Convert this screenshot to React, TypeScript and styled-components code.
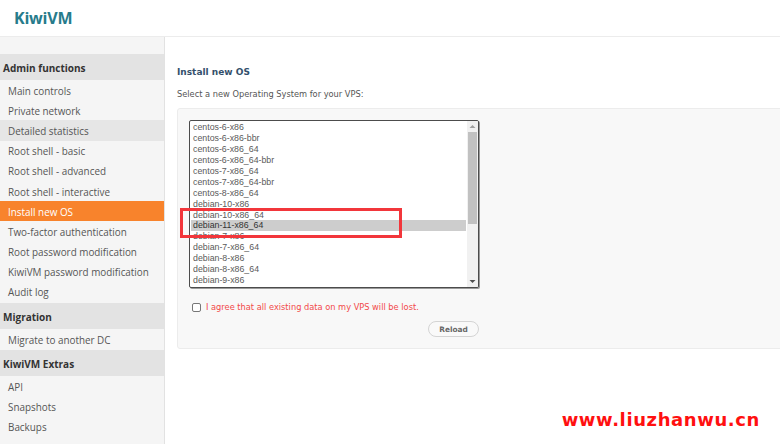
import React from 'react'
import styled, { createGlobalStyle } from 'styled-components'


const GlobalStyle = createGlobalStyle`
  html, body {
    margin: 0;
    padding: 0;
    background: #fff;
    overflow: hidden;
  }
  body {
    font-family: 'Open Sans', 'Liberation Sans', sans-serif;
  }
`


const adminItems = [
  'Main controls',
  'Private network',
  'Detailed statistics',
  'Root shell - basic',
  'Root shell - advanced',
  'Root shell - interactive',
  'Install new OS',
  'Two-factor authentication',
  'Root password modification',
  'KiwiVM password modification',
  'Audit log',
]

// only the rows that fit in the visible part of the list box
const osList = [
  'centos-6-x86',
  'centos-6-x86-bbr',
  'centos-6-x86_64',
  'centos-6-x86_64-bbr',
  'centos-7-x86_64',
  'centos-7-x86_64-bbr',
  'centos-8-x86_64',
  'debian-10-x86',
  'debian-10-x86_64',
  'debian-11-x86_64',
  'debian-7-x86',
  'debian-7-x86_64',
  'debian-8-x86',
  'debian-8-x86_64',
  'debian-9-x86',
]


const Page = styled.div`
  width: 780px;
  height: 444px;
  display: flex;
  flex-direction: column;
  overflow: hidden;
  position: relative;
`

const Header = styled.header`
  height: 36px;
  flex: 0 0 36px;
  border-bottom: 1px solid #ececec;
  display: flex;
  align-items: center;
  padding-left: 14px;
`

const Logo = styled.div`
  font-family: 'Open Sans', sans-serif;
  font-weight: 700;
  font-size: 16px;
  color: #277b8b;
  letter-spacing: -0.2px;
`

const Body = styled.div`
  flex: 1;
  display: flex;
  min-height: 0;
`

const Sidebar = styled.nav`
  width: 164px;
  flex: 0 0 164px;
  background: #f5f5f5;
  border-right: 1px solid #e2e2e2;
  padding-top: 17px;
`

const SectionTitle = styled.div<{ first?: boolean }>`
  height: 26px;
  margin-top: ${({ first }) => (first ? '0' : '1px')};
  background: #e3e3e3;
  display: flex;
  align-items: center;
  padding: 1px 0 0 3px;
  box-sizing: border-box;
  font-size: 10px;
  font-weight: 700;
  color: #333;
`

const NavItem = styled.div<{ active?: boolean; hover?: boolean }>`
  height: 20.2px;
  display: flex;
  align-items: center;
  padding: 1px 0 0 8px;
  box-sizing: border-box;
  font-size: 9.9px;
  color: ${({ active }) => (active ? '#fff' : '#555')};
  background: ${({ active, hover }) =>
    active ? '#f8832c' : hover ? '#e6e6e6' : 'transparent'};
  white-space: nowrap;
`

const Content = styled.main`
  flex: 1;
  padding: 29px 0 0 12px;
  min-width: 0;
`

const Title = styled.h2`
  margin: 0;
  font-family: 'DejaVu Sans', Verdana, sans-serif;
  font-size: 9px;
  font-weight: 700;
  color: #34506c;
  line-height: 12px;
`

const Subtitle = styled.p`
  margin: 10px 0 0;
  font-family: 'DejaVu Sans', Verdana, sans-serif;
  font-size: 8.25px;
  color: #555;
  line-height: 12px;
`

const Panel = styled.section`
  position: relative;
  margin-top: 8px;
  width: 640px;
  background: #f8f8f8;
  border: 1px solid #ececec;
  border-radius: 3px;
  padding: 11px 0 11px 11px;
`

const ListBox = styled.div`
  width: 288px;
  height: 166px;
  background: #fff;
  border: 1px solid #4c4c4c;
  border-radius: 2px;
  box-shadow: 1px 1px 0 #9a9a9a;
  display: flex;
  overflow: hidden;
`

const Options = styled.div`
  flex: 1;
  padding: 1px 1px 0;
  overflow: hidden;
`

const Option = styled.div<{ selected?: boolean }>`
  height: 10.95px;
  line-height: 11px;
  padding-left: 2px;
  font-family: 'Liberation Sans', Arial, sans-serif;
  font-size: 8.8px;
  color: ${({ selected }) => (selected ? '#333' : '#5a5a5a')};
  background: ${({ selected }) => (selected ? '#cdcdcd' : 'transparent')};
  white-space: nowrap;
  overflow: hidden;
`

const Scrollbar = styled.div`
  width: 11px;
  flex: 0 0 11px;
  background: #f1f1f1;
  display: flex;
  flex-direction: column;
  align-items: center;
`

const Arrow = styled.div`
  height: 11px;
  flex: 0 0 11px;
  display: flex;
  align-items: center;
  justify-content: center;
`

const Track = styled.div`
  flex: 1;
  width: 100%;
`

const Thumb = styled.div`
  width: 9px;
  margin: 0 auto;
  height: 92px;
  background: #c1c1c1;
`

const AgreeRow = styled.label`
  display: flex;
  align-items: center;
  gap: 5px;
  height: 10px;
  margin: 14px 0 0 3px;
  font-family: 'DejaVu Sans', Verdana, sans-serif;
  font-size: 8.25px;
  color: #f24a4a;
  white-space: nowrap;
`

const Check = styled.span`
  width: 7px;
  height: 7px;
  border: 1px solid #777;
  border-radius: 2px;
  background: #fff;
  display: inline-block;
`

const ButtonRow = styled.div`
  width: 290px;
  display: flex;
  justify-content: flex-end;
  margin-top: 9px;
`

const ReloadButton = styled.button`
  height: 16px;
  width: 51px;
  padding: 0;
  border: 1px solid #d4d4d4;
  border-radius: 8px;
  background: #f9f9f9;
  font-family: 'DejaVu Sans', Verdana, sans-serif;
  font-size: 7.4px;
  font-weight: 700;
  color: #666;
`

const Highlight = styled.div`
  position: absolute;
  left: 2px;
  top: 99px;
  width: 216px;
  height: 24px;
  border: 3px solid #f2363b;
  pointer-events: none;
`

const Watermark = styled.div`
  position: absolute;
  right: 20px;
  bottom: 14px;
  font-family: 'DejaVu Sans', sans-serif;
  font-weight: 700;
  font-size: 18px;
  line-height: 20px;
  color: #ff1010;
  letter-spacing: 0.6px;
`


const UpArrow = () => (
  <svg width="7" height="5" viewBox="0 0 7 5">
    <path d="M0.5 4 L3.5 1 L6.5 4 Z" fill="#a0a0a0" />
  </svg>
)

const DownArrow = () => (
  <svg width="7" height="5" viewBox="0 0 7 5">
    <path d="M0.5 1 L3.5 4 L6.5 1 Z" fill="#505050" />
  </svg>
)


export default function App() {
  return (
    <Page>
      <GlobalStyle />
      <Header>
        <Logo>KiwiVM</Logo>
      </Header>
      <Body>
        <Sidebar>
          <SectionTitle first>Admin functions</SectionTitle>
          {adminItems.map((item) => (
            <NavItem
              key={item}
              active={item === 'Install new OS'}
              hover={item === 'Detailed statistics'}
            >
              {item}
            </NavItem>
          ))}
          <SectionTitle>Migration</SectionTitle>
          <NavItem>Migrate to another DC</NavItem>
          <SectionTitle>KiwiVM Extras</SectionTitle>
          <NavItem>API</NavItem>
          <NavItem>Snapshots</NavItem>
          <NavItem>Backups</NavItem>
        </Sidebar>
        <Content>
          <Title>Install new OS</Title>
          <Subtitle>Select a new Operating System for your VPS:</Subtitle>
          <Panel>
            <ListBox>
              <Options>
                {osList.map((os) => (
                  <Option key={os} selected={os === 'debian-11-x86_64'}>
                    {os}
                  </Option>
                ))}
              </Options>
              <Scrollbar>
                <Arrow>
                  <UpArrow />
                </Arrow>
                <Track>
                  <Thumb />
                </Track>
                <Arrow>
                  <DownArrow />
                </Arrow>
              </Scrollbar>
            </ListBox>
            <AgreeRow>
              <Check />
              <span>I agree that all existing data on my VPS will be lost.</span>
            </AgreeRow>
            <ButtonRow>
              <ReloadButton>Reload</ReloadButton>
            </ButtonRow>
            <Highlight />
          </Panel>
        </Content>
      </Body>
      <Watermark>www.liuzhanwu.cn</Watermark>
    </Page>
  )
}
